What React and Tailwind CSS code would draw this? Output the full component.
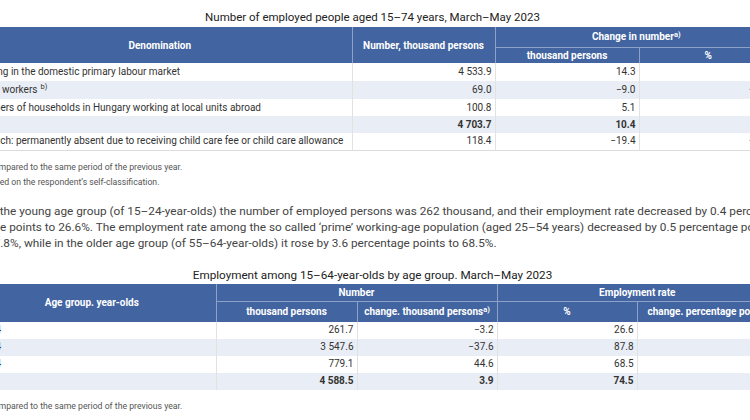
import React from 'react';

const rows1 = [
  { label: 'Working in the domestic primary labour market', n: '4\u00a0533.9', c: '14.3', p: '0.3' },
  { label: 'Public workers', sup: 'b)', n: '69.0', c: '\u22129.0', p: '\u221211.5' },
  { label: 'Members of households in Hungary working at local units abroad', n: '100.8', c: '5.1', p: '5.3' },
  { label: 'Total', n: '4\u00a0703.7', c: '10.4', p: '0.2', bold: true },
  { label: 'Of which: permanently absent due to receiving child care fee or child care allowance', n: '118.4', c: '\u221219.4', p: '\u221214.1' },
];

const rows2 = [
  { label: '15\u201324', n: '261.7', c: '\u22123.2', r: '26.6', rc: '\u22120.4' },
  { label: '25\u201354', n: '3\u00a0547.6', c: '\u221237.6', r: '87.8', rc: '\u22120.5' },
  { label: '55\u201364', n: '779.1', c: '44.6', r: '68.5', rc: '3.6' },
  { label: 'Total', n: '4\u00a0588.5', c: '3.9', r: '74.5', rc: '0.4', bold: true },
];

function App() {
  return (
    <div className="w-[750px] h-[420px] overflow-hidden bg-white font-[Roboto,sans-serif]">
      <div className="w-[809px] ml-[-32px]">
        {/* first table */}
        <h3 className="h-[27px] pt-[8px] text-center text-[11.5px] leading-[18px] text-[#222]">
          Number of employed people aged 15–74 years, March–May 2023
        </h3>
        <table className="w-[809px] table-fixed border-collapse text-[10px] text-[#333]">
          <colgroup>
            <col className="w-[384px]" />
            <col className="w-[143px]" />
            <col className="w-[144px]" />
            <col className="w-[138px]" />
          </colgroup>
          <thead className="bg-[#4264a0] text-white">
            <tr className="h-[20px]">
              <th rowSpan={2} className="border-r border-[#8ea2c8] font-bold">Denomination</th>
              <th rowSpan={2} className="border-r border-[#8ea2c8] font-bold">Number, thousand persons</th>
              <th colSpan={2} className="border-b border-[#8ea2c8] font-bold">
                Change in number<sup className="text-[7.5px]">a)</sup>
              </th>
            </tr>
            <tr className="h-[16px]">
              <th className="border-r border-[#8ea2c8] font-bold">thousand persons</th>
              <th className="font-bold">%</th>
            </tr>
          </thead>
          <tbody className="border-b border-[#dcdcdc]">
            {rows1.map((r, i) => (
              <tr key={i} className={`${i < 2 ? 'h-[18px]' : 'h-[17px]'} ${i % 2 === 1 ? 'bg-[#e9edf5]' : 'bg-white'} ${r.bold ? 'font-bold' : ''}`}>
                <td className="pl-[4px] whitespace-nowrap border-r border-[#e2e2e2] leading-[14px]">
                  {r.label}
                  {r.sup && <sup className="ml-[3px] text-[7.5px]">{r.sup}</sup>}
                </td>
                <td className="pr-[3px] text-right border-r border-[#e2e2e2] leading-[14px]">{r.n}</td>
                <td className="pr-[3px] text-right border-r border-[#e2e2e2] leading-[14px]">{r.c}</td>
                <td className="pr-[3px] text-right leading-[14px]">{r.p}</td>
              </tr>
            ))}
          </tbody>
        </table>

        <div className="mt-[9px] pl-[10px] text-[8.7px] leading-[15px] text-[#555]">
          <p>a) Compared to the same period of the previous year.</p>
          <p className="ml-[-3px]">b) Based on the respondent’s self-classification.</p>
        </div>

        <div className="mt-[13px] pl-[19px] text-[11.8px] leading-[16px] text-[#444] whitespace-nowrap">
          <p>In the young age group (of 15–24-year-olds) the number of employed persons was 262 thousand, and their employment rate decreased by 0.4 percentage</p>
          <p>age points to 26.6%. The employment rate among the so called ‘prime’ working-age population (aged 25–54 years) decreased by 0.5 percentage points to</p>
          <p>87.8%, while in the older age group (of 55–64-year-olds) it rose by 3.6 percentage points to 68.5%.</p>
        </div>

        {/* second table */}
        <h3 className="mt-[16px] h-[17px] text-center text-[11.7px] leading-[17px] text-[#222]">
          Employment among 15–64-year-olds by age group. March–May 2023
        </h3>
        <table className="w-[809px] table-fixed border-collapse text-[10px] text-[#333]">
          <colgroup>
            <col className="w-[248px]" />
            <col className="w-[141px]" />
            <col className="w-[140px]" />
            <col className="w-[140px]" />
            <col className="w-[140px]" />
          </colgroup>
          <thead className="bg-[#4264a0] text-white">
            <tr className="h-[18px]">
              <th rowSpan={2} className="border-r border-[#8ea2c8] font-bold">Age group. year-olds</th>
              <th colSpan={2} className="border-r border-b border-[#8ea2c8] font-bold">Number</th>
              <th colSpan={2} className="border-b border-[#8ea2c8] font-bold">Employment rate</th>
            </tr>
            <tr className="h-[20px]">
              <th className="border-r border-[#8ea2c8] font-bold">thousand persons</th>
              <th className="border-r border-[#8ea2c8] font-bold">
                change. thousand persons<sup className="text-[7.5px]">a)</sup>
              </th>
              <th className="border-r border-[#8ea2c8] font-bold">%</th>
              <th className="font-bold">change. percentage points</th>
            </tr>
          </thead>
          <tbody>
            {rows2.map((r, i) => (
              <tr key={i} className={`h-[17px] ${i % 2 === 1 ? 'bg-[#e9edf5]' : 'bg-white'} ${r.bold ? 'font-bold' : ''}`}>
                <td className="pl-[4px] border-r border-[#e2e2e2] leading-[14px]">{r.label}</td>
                <td className="pr-[3px] text-right border-r border-[#e2e2e2] leading-[14px]">{r.n}</td>
                <td className="pr-[3px] text-right border-r border-[#e2e2e2] leading-[14px]">{r.c}</td>
                <td className="pr-[3px] text-right border-r border-[#e2e2e2] leading-[14px]">{r.r}</td>
                <td className="pr-[3px] text-right leading-[14px]">{r.rc}</td>
              </tr>
            ))}
          </tbody>
        </table>

        <div className="mt-[9px] pl-[10px] text-[8.7px] leading-[15px] text-[#555]">
          <p>a) Compared to the same period of the previous year.</p>
        </div>
      </div>
    </div>
  );
}

export default App;
